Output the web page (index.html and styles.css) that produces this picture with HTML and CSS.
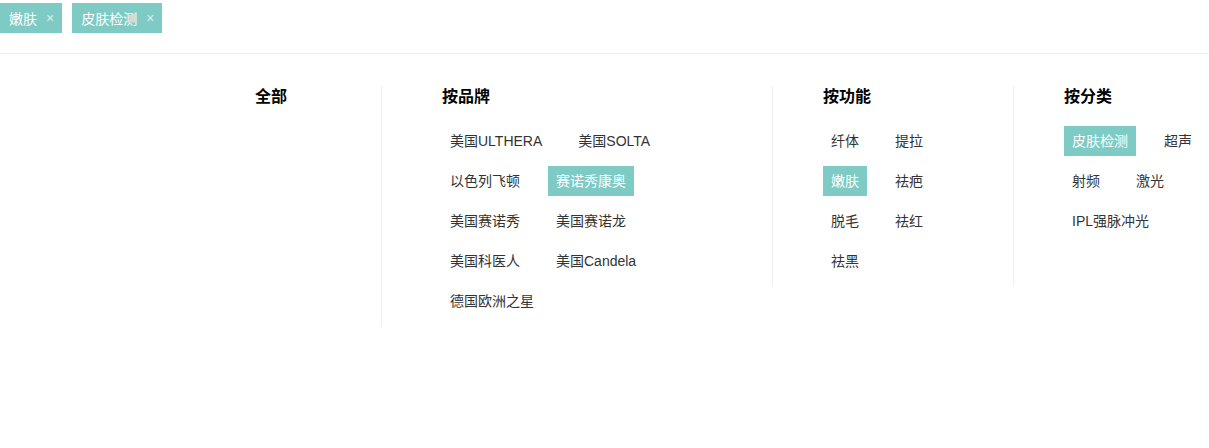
FILE: index.html
```html
<!DOCTYPE html>
<html lang="zh-CN">
<head>
    <meta charset="UTF-8">
    <meta name="viewport" content="width=device-width, initial-scale=1.0">
    <title>筛选</title>
    <link rel="stylesheet" href="styles.css">
</head>
<body>

    <section id="selected">
        <span class="tag">嫩肤<i class="close">×</i></span>
        <span class="tag">皮肤检测<i class="close">×</i></span>
    </section>

    <section id="filter">
        <div class="col col-all">
            <h3>全部</h3>
        </div>

        <div class="col col-brand">
            <h3>按品牌</h3>
            <ul class="opts">
                <li><a href="#">美国ULTHERA</a></li>
                <li><a href="#">美国SOLTA</a></li>
                <li><a href="#">以色列飞顿</a></li>
                <li><a class="on" href="#">赛诺秀康奥</a></li>
                <li><a href="#">美国赛诺秀</a></li>
                <li><a href="#">美国赛诺龙</a></li>
                <li><a href="#">美国科医人</a></li>
                <li><a href="#">美国Candela</a></li>
                <li><a href="#">德国欧洲之星</a></li>
            </ul>
        </div>

        <div class="col col-func">
            <h3>按功能</h3>
            <ul class="opts">
                <li><a href="#">纤体</a></li>
                <li><a href="#">提拉</a></li>
                <li><a class="on" href="#">嫩肤</a></li>
                <li><a href="#">祛疤</a></li>
                <li><a href="#">脱毛</a></li>
                <li><a href="#">祛红</a></li>
                <li><a href="#">祛黑</a></li>
            </ul>
        </div>

        <div class="col col-type">
            <h3>按分类</h3>
            <ul class="opts">
                <li><a class="on" href="#">皮肤检测</a></li>
                <li><a href="#">超声</a></li>
                <li><a href="#">射频</a></li>
                <li><a href="#">激光</a></li>
                <li><a href="#">IPL强脉冲光</a></li>
            </ul>
        </div>
    </section>

</body>
</html>
```

FILE: styles.css
```css
* {
    margin: 0;
    padding: 0;
    box-sizing: border-box;
}

body {
    font-family: 'Liberation Sans', 'Noto Sans CJK SC', sans-serif;
    font-size: 14px;
    color: #333;
    background: #fff;
    overflow: hidden;
}

/* selected tags */
#selected {
    display: flex;
    gap: 10px;
    padding-top: 3px;
    height: 54px;
    border-bottom: 1px solid #eee;
}

.tag {
    display: flex;
    align-items: center;
    height: 30px;
    padding: 0 8px 0 9px;
    background: #7ecac5;
    color: #fff;
}

.tag .close {
    font-style: normal;
    margin-left: 9px;
    color: #d8efed;
    font-size: 14px;
}

/* filter columns */
#filter {
    display: flex;
    align-items: flex-start;
    padding-top: 32px;
    padding-left: 255px;
}

.col {
    flex-shrink: 0;
}

.col h3 {
    font-size: 16px;
    font-weight: bold;
    color: #000;
    line-height: 22px;
    margin-bottom: 18px;
}

.col-all {
    width: 126px;
}

.col-brand {
    width: 391px;
    padding-left: 60px;
    padding-bottom: 1px;
    border-left: 1px solid #eee;
}

.col-func {
    width: 242px;
    padding-left: 50px;
    border-left: 1px solid #eee;
    border-right: 1px solid #eee;
}

.col-type {
    padding-left: 50px;
}

.opts {
    list-style: none;
    display: flex;
    flex-wrap: wrap;
    column-gap: 20px;
}

.opts li {
    margin-bottom: 10px;
}

.col-brand .opts {
    width: 240px;
}

.col-func .opts {
    width: 120px;
}

.col-type .opts {
    width: 140px;
}

.opts a {
    display: inline-block;
    height: 30px;
    line-height: 30px;
    padding: 0 8px;
    color: #333;
    text-decoration: none;
}

.opts a.on {
    background: #7ecac5;
    color: #fff;
}
```
